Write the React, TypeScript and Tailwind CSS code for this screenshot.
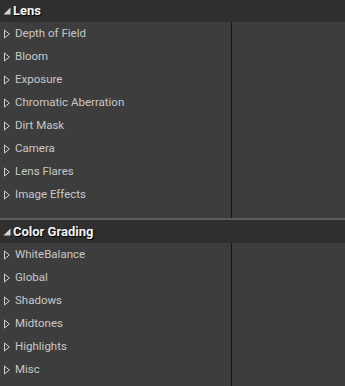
import React from 'react';

const sections = [
  {
    title: 'Lens',
    items: ['Depth of Field', 'Bloom', 'Exposure', 'Chromatic Aberration', 'Dirt Mask', 'Camera', 'Lens Flares', 'Image Effects'],
  },
  {
    title: 'Color Grading',
    items: ['WhiteBalance', 'Global', 'Shadows', 'Midtones', 'Highlights', 'Misc'],
  },
];

function Collapsed() {
  return (
    <svg width="6" height="10" viewBox="0 0 6 10" className="shrink-0">
      <path d="M0.5 1 L5.3 5 L0.5 9 Z" fill="none" stroke="#d2d2d2" strokeWidth="1" strokeLinejoin="round" />
    </svg>
  );
}

function Expanded() {
  return (
    <svg width="8" height="8" viewBox="0 0 8 8" className="shrink-0">
      <path d="M7.5 0.5 L7.5 7.5 L0.5 7.5 Z" fill="#d6d6d6" />
    </svg>
  );
}

export default function App() {
  return (
    <div className="w-[345px] h-[386px] overflow-hidden bg-[#3d3d3d]" style={{ fontFamily: 'Roboto, "Noto Sans", sans-serif' }}>
      {sections.map((s, i) => (
        <div key={s.title}>
          {i > 0 && <div className="h-[2px] bg-[#5b5b5b]" />}
          <div className={(i === 0 ? 'h-[22px]' : 'h-[23px]') + ' bg-[#2f2f2f] flex items-center gap-[2px] pl-[3px]'}>
            <Expanded />
            <span className="text-[13px] font-bold text-[#f2f2f2] [text-shadow:1px_1px_1px_#000]">{s.title}</span>
          </div>
          <div className="flex">
            <div className={(i === 0 ? 'pb-[12px]' : 'pb-[11px]') + ' w-[231px] flex flex-col'}>
              {s.items.map((it) => (
                <div key={it} className="h-[23px] flex items-center gap-[5px] pl-[4px]">
                  <Collapsed />
                  <span className="text-[11.5px] text-[#c8c8c8]">{it}</span>
                </div>
              ))}
            </div>
            <div className="w-px bg-[#151515]" />
            <div className="flex-1" />
          </div>
        </div>
      ))}
    </div>
  );
}
